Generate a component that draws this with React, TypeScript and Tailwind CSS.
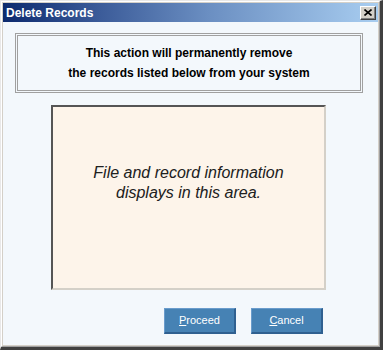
export default function App() {
  return (
    <div className="w-[383px] h-[350px] bg-[#d4d0c8] border-t border-l border-t-[#e8e8e8] border-l-[#e8e8e8] border-r-[3px] border-b-[3px] border-r-[#404040] border-b-[#404040] [font-family:'Liberation_Sans',Arial,sans-serif]">
      <div className="h-full flex flex-col border-t border-l border-t-white border-l-white border-r border-b border-r-[#a0a0a0] border-b-[#a0a0a0] p-px">
        <div className="h-[19px] flex items-center justify-between pl-[3px] pr-[2px] bg-[linear-gradient(to_right,#0c2a6e_0%,#3a5a98_25%,#6b8fc2_55%,#a8cdf0_100%)]">
          <span className="text-white font-bold text-[12px] leading-none">Delete Records</span>
          <button className="w-4 h-[14px] flex items-center justify-center bg-[#d4d0c8] border border-t-white border-l-white border-r-[#404040] border-b-[#404040] shadow-[inset_-1px_-1px_0_#808080]">
            <svg width="8" height="7" viewBox="0 0 8 7">
              <path d="M0.5 0.5 L7.5 6.5 M7.5 0.5 L0.5 6.5" stroke="#000" strokeWidth="1.6" />
            </svg>
          </button>
        </div>
        <div className="flex-1 bg-[#f3f8fc] flex flex-col items-start pt-[11px] pl-[12px]">
          <div className="w-[348px] h-[60px] border border-[#a0a0a0] p-px">
            <div className="h-full border border-[#a0a0a0] flex flex-col items-center justify-center gap-[6px] text-[12px] font-bold text-black leading-[14px]">
              <span>This action will permanently remove</span>
              <span>the records listed below from your system</span>
            </div>
          </div>
          <div className="ml-[36px] mt-[12px] w-[275px] h-[185px] bg-[#fdf4ea] border-t-2 border-l-2 border-t-[#555] border-l-[#555] border-r-2 border-b-2 border-r-[#d4d0c8] border-b-[#d4d0c8] flex flex-col items-center justify-center pb-[30px] text-[16px] italic text-[#202020] leading-[20px]">
            <span>File and record information</span>
            <span>displays in this area.</span>
          </div>
          <div className="ml-[149px] mt-[18px] flex gap-[15px]">
            <button className="w-[72px] h-[26px] bg-[#4682b4] border-r-2 border-b-2 border-r-[#2f6090] border-b-[#2f6090] border-t border-l border-t-[#6a9ccc] border-l-[#6a9ccc] text-white text-[11px]">
              <span className="underline">P</span>roceed
            </button>
            <button className="w-[72px] h-[26px] bg-[#4682b4] border-r-2 border-b-2 border-r-[#2f6090] border-b-[#2f6090] border-t border-l border-t-[#6a9ccc] border-l-[#6a9ccc] text-white text-[11px]">
              <span className="underline">C</span>ancel
            </button>
          </div>
        </div>
      </div>
    </div>
  );
}
